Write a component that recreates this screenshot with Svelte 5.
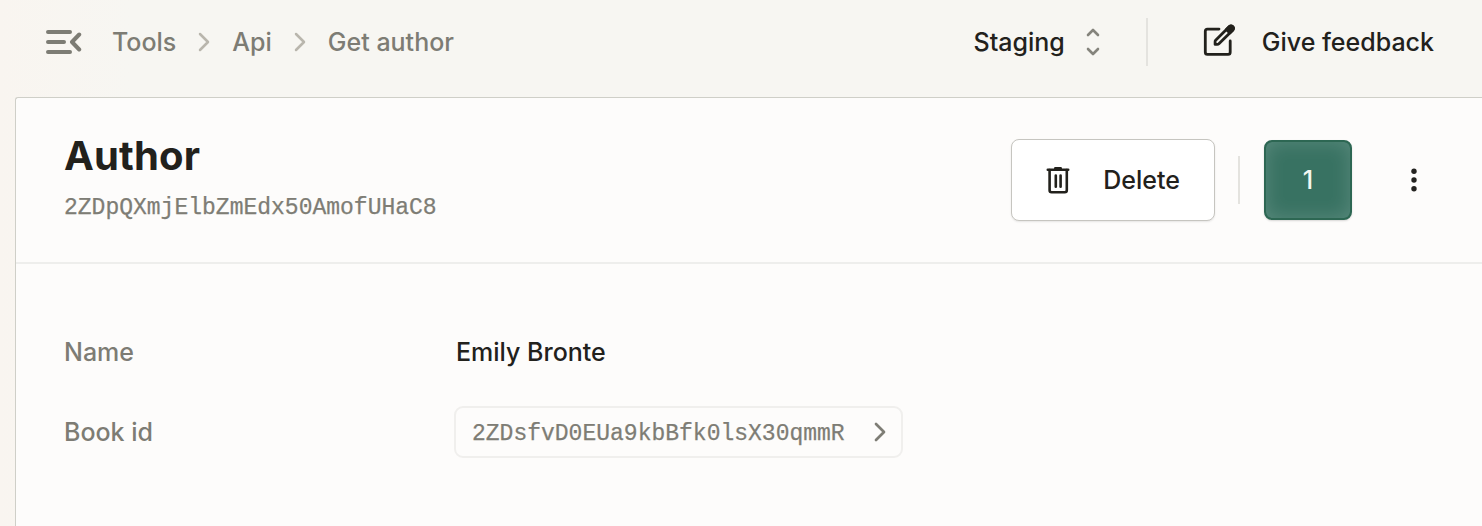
<script>
  const crumbs = ['Tools', 'Api', 'Get author'];
</script>

<div class="app">
  <header class="topbar">
    <svg class="menu" width="36" height="26" viewBox="0 0 36 26" fill="none" stroke="currentColor" stroke-width="4" stroke-linecap="round" stroke-linejoin="round">
      <path d="M2 3H24M2 13H18M2 23H24" />
      <path d="M33.2 5.5L26 13L33.2 20.5" />
    </svg>
    <nav class="crumbs">
      {#each crumbs as crumb, i}
        {#if i > 0}
          <svg width="12" height="20" viewBox="0 0 12 20" fill="none" stroke="#b9b6ad" stroke-width="2.5" stroke-linecap="round" stroke-linejoin="round"><path d="M2 2L10 10L2 18" /></svg>
        {/if}
        <span>{crumb}</span>
      {/each}
    </nav>
    <div class="env">
      <span>Staging</span>
      <svg width="14" height="28" viewBox="0 0 14 28" fill="none" stroke="#85847c" stroke-width="2.6" stroke-linecap="round" stroke-linejoin="round"><path d="M2 7L7 2L12 7M2 21L7 26L12 21" /></svg>
    </div>
    <i class="rule"></i>
    <div class="feedback">
      <svg width="34" height="34" viewBox="0 0 34 34" fill="none" stroke="currentColor" stroke-width="2.8" stroke-linecap="round" stroke-linejoin="round">
        <path d="M16 6.1H4.4Q2.3 6.1 2.3 8.2V29.2Q2.3 31.3 4.4 31.3H25.1Q27.2 31.3 27.2 29.2V18" />
        <path d="M12.4 17.6L26.4 3.6Q28 2.1 29.6 3.6T29.9 6.9L15.9 20.8Q15.3 21.4 14.2 21.4H12.1V19Q12 18.1 12.4 17.6Z" />
        <path d="M23.4 6.6L26.4 3.6Q28 2.1 29.6 3.6T29.9 6.9L26.8 10Z" fill="currentColor" />
      </svg>
      <span>Give feedback</span>
    </div>
  </header>

  <main class="panel">
    <section class="heading">
      <div class="title">
        <h1>Author</h1>
        <code>2ZDpQXmjElbZmEdx50AmofUHaC8</code>
      </div>
      <button class="delete">
        <svg width="24" height="28" viewBox="0 0 24 28" fill="none" stroke="currentColor" stroke-width="2.6" stroke-linecap="round" stroke-linejoin="round">
          <path d="M1.8 3.8H22.2M9.3 2.3H14.7" />
          <path d="M3.6 4V24.2Q3.6 26.2 5.6 26.2H18.8Q20.8 26.2 20.8 24.2V4M9.8 9.6V20.8M14.6 9.6V20.8" />
        </svg>
        <span>Delete</span>
      </button>
      <i class="rule"></i>
      <button class="count">1</button>
      <svg class="dots" width="6" height="24" viewBox="0 0 6 24" fill="#242320"><circle cx="3" cy="3.2" r="2.7" /><circle cx="3" cy="12" r="2.7" /><circle cx="3" cy="20.8" r="2.7" /></svg>
    </section>
    <dl>
      <div class="row"><dt>Name</dt><dd>Emily Bronte</dd></div>
      <div class="row">
        <dt>Book id</dt>
        <dd class="chip">
          <code>2ZDsfvD0EUa9kbBfk0lsX30qmmR</code>
          <svg width="12" height="20" viewBox="0 0 12 20" fill="none" stroke="#7e7d75" stroke-width="2.7" stroke-linecap="round" stroke-linejoin="round"><path d="M2 2L10 10L2 18" /></svg>
        </dd>
      </div>
    </dl>
  </main>
</div>

<style>
  :global(body) { background: #f7f5f1; }
  .app {
    box-sizing: border-box;
    height: 526px;
    padding-left: 15px;
    overflow: hidden;
    display: flex;
    flex-direction: column;
    background: linear-gradient(90deg, #f9f5f0 0, #f7f6f2 130px, #f7f6f2 100%);
    color: #22211c;
    font: 500 25px/32px Inter, sans-serif;
  }
  .topbar {
    height: 97px;
    box-sizing: border-box;
    padding: 0 48px 13px 31px;
    display: flex;
    align-items: center;
    white-space: nowrap;
  }
  .menu { color: #7d7c74; margin-right: 30px; }
  .crumbs { display: flex; align-items: center; gap: 22px; color: #7d7c74; }
  .env { margin-left: auto; display: flex; align-items: center; gap: 21.5px; }
  .env svg { margin-right: 1px; }
  .rule { width: 2px; height: 48px; background: #e4e3df; flex: none; }
  .topbar .rule { margin: 0 55px 0 44.5px; }
  .feedback { display: flex; align-items: center; gap: 25px; }
  .feedback svg { margin-top: -4px; }
  svg { display: block; flex: none; }
  .panel {
    flex: 1;
    background: #fdfcfb;
    border: solid #cfcfc8;
    border-width: 1px 0 0 1px;
    border-top-left-radius: 3px;
  }
  .heading {
    box-sizing: border-box;
    height: 166px;
    border-bottom: 2px solid #eeeeec;
    padding: 0 65px 0 48px;
    display: flex;
    align-items: center;
  }
  .title { margin: 0 auto 7px 0; }
  h1 { margin: 0 0 14px; font-size: 40px; line-height: 48px; font-weight: 700; letter-spacing: .15px; }
  code { display: block; font: 400 23px/28px "Liberation Mono", monospace; color: #7e7d75; -webkit-text-stroke: .25px #7e7d75; }
  button { box-sizing: border-box; font: inherit; color: inherit; display: flex; align-items: center; border-radius: 8px; }
  .delete {
    width: 204px;
    height: 82px;
    padding: 0 34px;
    justify-content: space-between;
    background: #fff;
    border: 1px solid #c6c5c0;
    box-shadow: 0 1px 2px #00000018;
  }
  .heading .rule { margin: 0 24px 0 23px; }
  .count {
    width: 88px;
    height: 80px;
    justify-content: center;
    color: #f4f7f2;
    background: #387262;
    border: 2px solid #2d6753;
    box-shadow: inset 0 0 20px #ffffff2b, 0 1px 2px #00000026;
  }
  .dots { margin-left: 59px; }
  dl { margin: 0; padding: 62px 48px; display: flex; flex-direction: column; gap: 28px; }
  .row { display: grid; grid-template-columns: 392px auto; height: 52px; align-items: center; justify-content: start; }
  dt { color: #7d7c74; }
  dd { margin: 0; }
  .chip {
    box-sizing: border-box;
    width: 449px;
    height: 52px;
    margin-left: -2px;
    padding: 0 15px 0 16px;
    display: flex;
    align-items: center;
    justify-content: space-between;
    border: 2px solid #f0efed;
    border-radius: 9px;
  }
  .chip code { padding-top: 3px; }
</style>
